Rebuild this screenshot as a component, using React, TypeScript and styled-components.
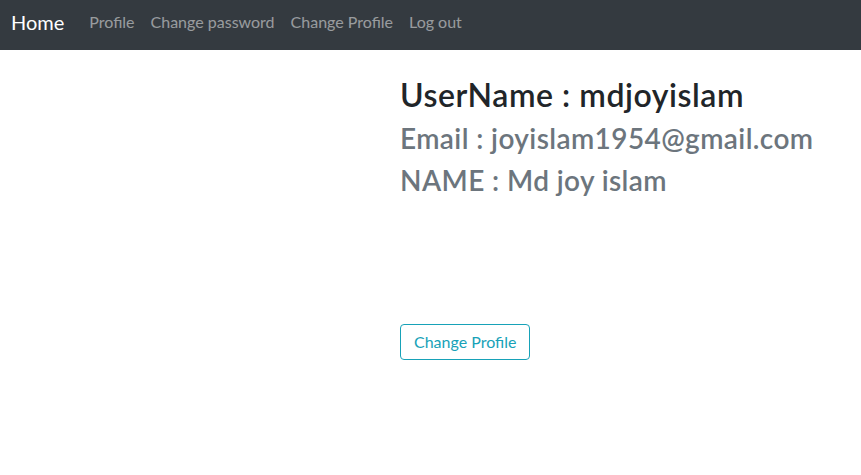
import React from 'react';
import styled, {createGlobalStyle} from 'styled-components';

const GlobalStyle = createGlobalStyle`
  body {
    margin: 0;
    font-family: "Segoe UI", Lato, "Noto Sans", sans-serif;
    font-size: 16px;
    color: #212529;
    background: #ffffff;
  }
`;

const links = ['Profile', 'Change password', 'Change Profile', 'Log out'];

function App() {
  return (
    <>
      <GlobalStyle />
      <Navbar>
        <Brand href="#">Home</Brand>
        <NavList>
          {links.map((l) => (
            <NavLink key={l} href="#">
              {l}
            </NavLink>
          ))}
        </NavList>
      </Navbar>
      <Main>
        <Spacer />
        <Details>
          <UserName>UserName : mdjoyislam</UserName>
          <Muted>Email : joyislam1954@gmail.com</Muted>
          <Muted>NAME : Md joy islam</Muted>
          <OutlineButton type="button">Change Profile</OutlineButton>
        </Details>
      </Main>
    </>
  );
}

const Navbar = styled.nav`
  display: flex;
  align-items: center;
  height: 50px;
  box-sizing: border-box;
  padding: 0 11px 7px;
  background: #343a40;
`;

const Brand = styled.a`
  font-size: 20px;
  color: #ffffff;
  text-decoration: none;
  margin-right: 17px;
`;

const NavList = styled.div`
  display: flex;
`;

const NavLink = styled.a`
  padding: 0 8px;
  font-size: 16px;
  color: rgba(255, 255, 255, 0.5);
  text-decoration: none;
`;

const Main = styled.div`
  display: flex;
`;

const Spacer = styled.div`
  width: 386px;
`;

const Details = styled.div`
  display: flex;
  flex-direction: column;
  align-items: flex-start;
  padding: 26px 14px 0;
`;

const UserName = styled.h2`
  margin: 0 0 8px;
  font-size: 32px;
  font-weight: 600;
  line-height: 1.2;
  letter-spacing: 0.55px;
`;

const Muted = styled.h3`
  margin: 0 0 8px;
  font-size: 28px;
  font-weight: 600;
  line-height: 1.2;
  letter-spacing: 0.4px;
  color: #6c757d;
`;

const OutlineButton = styled.button`
  margin-top: 118px;
  padding: 5px 13px;
  font-family: inherit;
  font-size: 16px;
  line-height: 1.5;
  color: #17a2b8;
  background: transparent;
  border: 1px solid #17a2b8;
  border-radius: 4px;
`;

export default App;
